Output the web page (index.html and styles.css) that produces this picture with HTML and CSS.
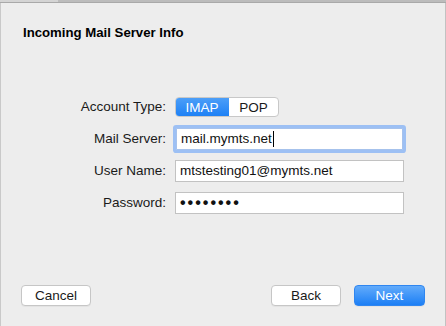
FILE: index.html
```html
<!DOCTYPE html>
<html lang="en">
<head>
  <meta charset="UTF-8">
  <title>Incoming Mail Server Info</title>
  <link rel="stylesheet" href="styles.css">
</head>
<body>
  <div class="chrome">
    <div class="chrome-tab"></div>
    <div class="chrome-rest"></div>
  </div>
  <div class="sheet">
    <h1 class="title">Incoming Mail Server Info</h1>
    <div class="form">
      <label class="label">Account Type:</label>
      <div class="segmented">
        <span class="seg seg-active">IMAP</span>
        <span class="seg">POP</span>
      </div>

      <label class="label">Mail Server:</label>
      <div class="field focused">mail.mymts.net<span class="caret"></span></div>

      <label class="label">User Name:</label>
      <div class="field">mtstesting01@mymts.net</div>

      <label class="label">Password:</label>
      <div class="field dots">&bull;&bull;&bull;&bull;&bull;&bull;&bull;&bull;</div>
    </div>
    <div class="footer">
      <button class="btn">Cancel</button>
      <div class="spacer"></div>
      <button class="btn">Back</button>
      <button class="btn btn-primary">Next</button>
    </div>
  </div>
</body>
</html>
```

FILE: styles.css
```css
body {
  margin: 0;
  height: 326px;
  overflow: hidden;
  background: #ededed;
  font-family: 'Liberation Sans', Arial, sans-serif;
  font-size: 13px;
  color: #000;
  display: flex;
  flex-direction: column;
}
.chrome {
  display: flex;
  height: 2px;
  border-bottom: 1px solid #a9a9a9;
}
.chrome-tab {
  width: 58px;
  background: #d4d4d4;
}
.chrome-rest {
  flex: 1;
  background: #bcbcbc;
}
.sheet {
  flex: 1;
  display: flex;
  flex-direction: column;
  border-left: 1px solid #c9c9c9;
  border-right: 1px solid #c2c2c2;
}
.title {
  margin: 0;
  padding: 22px 0 0 22px;
  font-size: 13.2px;
  line-height: 16px;
  font-weight: 700;
}
.form {
  margin-top: 55px;
  display: grid;
  grid-template-columns: 165px 229px;
  grid-auto-rows: 22px;
  column-gap: 9px;
  row-gap: 10px;
  align-items: center;
}
.label {
  text-align: right;
  line-height: 16px;
  font-size: 13.5px;
  color: #1a1a1a;
}
.segmented {
  display: flex;
  width: 104px;
  height: 20px;
  border-radius: 4px;
  border: 1px solid #c8c8c8;
  box-sizing: border-box;
  background: #fff;
  overflow: hidden;
}
.seg {
  flex: 1;
  display: flex;
  align-items: center;
  justify-content: center;
  font-size: 13.5px;
  color: #1a1a1a;
}
.seg-active {
  flex: 0 0 54px;
  margin: -1px 0 -1px -1px;
  color: #fff;
  background: linear-gradient(#4fa0f8, #1b7ff5);
}
.field {
  height: 22px;
  box-sizing: border-box;
  border: 1px solid #c2c2c2;
  background: #fff;
  padding: 0 0 0 4px;
  line-height: 20px;
  font-size: 13.5px;
  color: #111;
  display: flex;
  align-items: center;
}
.field.focused {
  margin: 0 1px;
  border-color: #a6c2ec;
  border-radius: 1px;
  box-shadow: 0 0 0 3px #9dc0f4;
}
.caret {
  display: inline-block;
  width: 1px;
  height: 16px;
  background: #000;
  margin-left: 1px;
}
.dots {
  font-size: 16px;
  letter-spacing: 2px;
  font-weight: 700;
}
.footer {
  margin-top: auto;
  display: flex;
  align-items: center;
  padding: 0 20px 20px 20px;
  gap: 13px;
}
.spacer {
  flex: 1;
}
.btn {
  width: 70px;
  height: 21px;
  padding: 0;
  border: 1px solid #c6c6c6;
  border-radius: 4px;
  background: #fff;
  font-family: 'Liberation Sans', Arial, sans-serif;
  font-size: 13.5px;
  color: #1a1a1a;
  box-shadow: 0 1px 0 rgba(0,0,0,0.04);
}
.btn-primary {
  width: 71px;
  border-color: #2f86f0;
  color: #fff;
  background: linear-gradient(#62abfb, #1c7ff5);
}
```
